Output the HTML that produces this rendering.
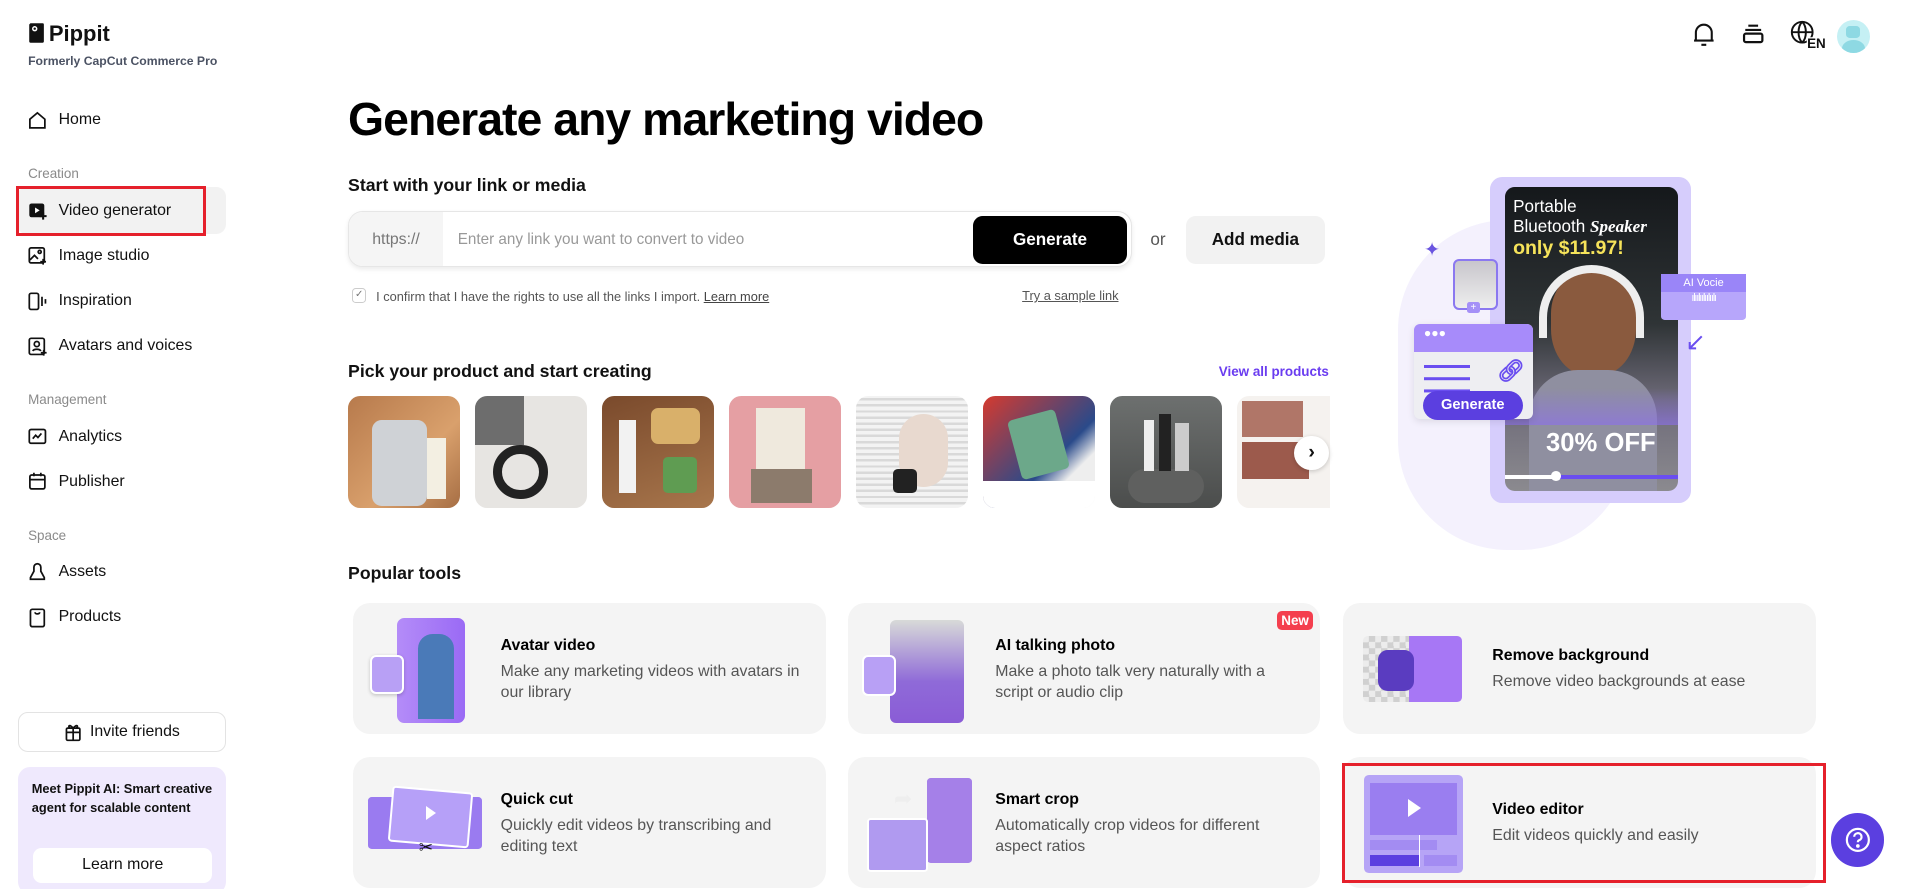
<!DOCTYPE html>
<html><head><meta charset="utf-8">
<style>
*{box-sizing:border-box;margin:0;padding:0}
html,body{width:1905px;height:889px;overflow:hidden;background:#fff}
#root{zoom:1.2212;width:1560px;height:728px;position:relative;font-family:"Liberation Sans",Arial,sans-serif;color:#111}
.a{position:absolute}
.nav{position:absolute;left:22px;font-size:13px;color:#111;display:flex;align-items:center;gap:9px}
.nav svg{width:17px;height:17px}
.lab{position:absolute;left:23px;font-size:11px;color:#8a8a8a}
.thumb{position:absolute;top:324px;width:92px;height:92px;border-radius:10px;overflow:hidden}
.card{position:absolute;width:387px;height:107px;background:#f4f4f4;border-radius:14px}
.card .t{position:absolute;left:121px;font-size:13px;font-weight:bold;color:#000}
.card .d{position:absolute;left:121px;font-size:13px;color:#555;line-height:17px;width:245px}
</style></head><body><div id="root">

<svg class="a" style="left:23px;top:18px" width="14" height="18" viewBox="0 0 14 18"><path d="M2 1h10a1 1 0 0 1 1 1v14a1 1 0 0 1-1 1H2a1 1 0 0 1-1-1V2z" fill="#111"/><circle cx="5.5" cy="5.5" r="2.2" fill="#fff"/><circle cx="5.5" cy="5.5" r="1" fill="#111"/></svg>
<div class="a" style="left:40px;top:17px;font-size:18px;font-weight:bold">Pippit</div>
<div class="a" style="left:23px;top:44px;font-size:10px;font-weight:bold;color:#4b5263">Formerly CapCut Commerce Pro</div>

<div class="nav" style="top:90px"><svg viewBox="0 0 18 18" fill="none" stroke="#111" stroke-width="1.5"><path d="M2.5 8 9 2.5 15.5 8v7.5h-13z"/></svg>Home</div>
<div class="lab" style="top:136px">Creation</div>
<div class="a" style="left:14px;top:153px;width:171px;height:39px;background:#f2f2f2;border-radius:8px"></div>
<div class="a" style="left:13px;top:152px;width:156px;height:41px;border:3px solid #e5202b"></div>
<div class="nav" style="top:164px"><svg viewBox="0 0 18 18"><rect x="2" y="3" width="13" height="12" rx="2" fill="#111"/><path d="M7 6.5v5l4-2.5z" fill="#fff"/><path d="M14 11v6M11 14h6" stroke="#111" stroke-width="1.8"/></svg>Video generator</div>
<div class="nav" style="top:201px"><svg viewBox="0 0 18 18" fill="none" stroke="#111" stroke-width="1.5"><rect x="2" y="2.5" width="13" height="13" rx="1.5"/><circle cx="11" cy="6" r="1.3"/><path d="M2.5 13l4-4 3 3"/><path d="M14 12v5M11.5 14.5h5"/></svg>Image studio</div>
<div class="nav" style="top:238px"><svg viewBox="0 0 18 18" fill="none" stroke="#111" stroke-width="1.5"><rect x="2" y="2" width="8" height="14" rx="1.5"/><path d="M13 5v8M16 7v4"/></svg>Inspiration</div>
<div class="nav" style="top:275px"><svg viewBox="0 0 18 18" fill="none" stroke="#111" stroke-width="1.5"><rect x="2" y="2" width="13" height="14" rx="1.5"/><circle cx="8.5" cy="7" r="2.2"/><path d="M5 13c1-2 6-2 7 0"/><path d="M14.5 12v5M12 14.5h5"/></svg>Avatars and voices</div>
<div class="lab" style="top:321px">Management</div>
<div class="nav" style="top:349px"><svg viewBox="0 0 18 18" fill="none" stroke="#111" stroke-width="1.5"><rect x="2" y="3" width="14" height="12" rx="1.5"/><path d="M5 11l2.5-3 2 2 3-3.5"/></svg>Analytics</div>
<div class="nav" style="top:386px"><svg viewBox="0 0 18 18" fill="none" stroke="#111" stroke-width="1.5"><rect x="2.5" y="3.5" width="13" height="12" rx="1.5"/><path d="M2.5 7.5h13M6 1.5v3M12 1.5v3"/></svg>Publisher</div>
<div class="lab" style="top:432px">Space</div>
<div class="nav" style="top:460px"><svg viewBox="0 0 18 18" fill="none" stroke="#111" stroke-width="1.5"><path d="M6 4.5a3 3 0 0 1 6 0V8l3 5.5v1.5H3v-1.5L6 8z"/></svg>Assets</div>
<div class="nav" style="top:497px"><svg viewBox="0 0 18 18" fill="none" stroke="#111" stroke-width="1.5"><rect x="3" y="2" width="12" height="15" rx="1.5"/><path d="M7 4.5c0 2 4 2 4 0"/></svg>Products</div>

<div class="a" style="left:15px;top:583px;width:170px;height:33px;border:1px solid #e3e3e3;border-radius:8px;font-size:13px;display:flex;align-items:center;justify-content:center;gap:6px"><svg width="15" height="16" viewBox="0 0 15 16" fill="none" stroke="#111" stroke-width="1.4"><rect x="2" y="5" width="11" height="10" rx="1"/><path d="M2 8.5h11M7.5 5v10M5 5c-2-1-1-4 2.5 0M10 5c2-1 1-4-2.5 0"/></svg>Invite friends</div>
<div class="a" style="left:15px;top:628px;width:170px;height:104px;background:#efe9fd;border-radius:10px"></div>
<div class="a" style="left:26px;top:639px;width:150px;font-size:10.5px;font-weight:bold;line-height:15px;color:#111">Meet Pippit AI: Smart creative agent for scalable content</div>
<div class="a" style="left:27px;top:694px;width:147px;height:29px;background:#fff;border-radius:7px;font-size:13px;display:flex;align-items:center;justify-content:center">Learn more</div>

<svg class="a" style="left:1385px;top:17px" width="21" height="22" viewBox="0 0 21 22" fill="none" stroke="#111" stroke-width="1.7"><path d="M4 16V9.5a6.5 6.5 0 0 1 13 0V16zM2.5 16h16M8.5 19.5h4"/></svg>
<svg class="a" style="left:1426px;top:18px" width="20" height="20" viewBox="0 0 20 20" fill="none" stroke="#111" stroke-width="1.8"><path d="M6 3h8M3.5 6.5h13"/><rect x="2.5" y="9.5" width="15" height="7" rx="1.5"/></svg>
<svg class="a" style="left:1466px;top:16px" width="30" height="24" viewBox="0 0 30 24" fill="none" stroke="#111" stroke-width="1.6"><circle cx="10" cy="10" r="8.5"/><path d="M1.5 10h17M10 1.5c-4 4-4 13 0 17M10 1.5c4 4 4 13 0 17"/><text x="14" y="23" font-family="Liberation Sans" font-weight="bold" font-size="11" fill="#111" stroke="#fff" stroke-width="2" paint-order="stroke">EN</text></svg>
<div class="a" style="left:1504px;top:16px;width:27px;height:27px;border-radius:50%;background:#c5f0f4;overflow:hidden"><div class="a" style="left:8px;top:5px;width:11px;height:10px;background:#8ed9e3;border-radius:3px"></div><div class="a" style="left:4px;top:17px;width:19px;height:14px;background:#8ed9e3;border-radius:50%"></div></div>

<div class="a" style="left:285px;top:75px;font-size:38px;font-weight:bold;letter-spacing:-0.8px;color:#000">Generate any marketing video</div>
<div class="a" style="left:285px;top:143px;font-size:14.5px;font-weight:bold">Start with your link or media</div>
<div class="a" style="left:285px;top:173px;width:642px;height:46px;border:1px solid #e6e6e6;border-radius:12px;box-shadow:0 2px 4px rgba(0,0,0,.08);overflow:hidden;background:#fff">
 <div class="a" style="left:0;top:0;width:77px;height:46px;background:#f5f5f5;font-size:13px;color:#777;display:flex;align-items:center;justify-content:center">https://</div>
 <div class="a" style="left:89px;top:15px;font-size:12.5px;color:#999">Enter any link you want to convert to video</div>
 <div class="a" style="left:511px;top:3px;width:126px;height:39px;background:#000;border-radius:8px;color:#fff;font-size:14px;font-weight:bold;display:flex;align-items:center;justify-content:center">Generate</div>
</div>
<div class="a" style="left:942px;top:188px;font-size:14px;color:#555">or</div>
<div class="a" style="left:971px;top:177px;width:114px;height:39px;background:#f2f2f2;border-radius:8px;font-size:14px;font-weight:bold;display:flex;align-items:center;justify-content:center">Add media</div>
<div class="a" style="left:288px;top:236px;width:12px;height:12px;border:1px solid #ccc;border-radius:3px;font-size:8px;color:#777;text-align:center;line-height:10px">✓</div>
<div class="a" style="left:308px;top:237px;font-size:10.5px;color:#555">I confirm that I have the rights to use all the links I import. <u style="color:#444">Learn more</u></div>
<div class="a" style="left:837px;top:236px;font-size:10.5px;color:#555;text-decoration:underline">Try a sample link</div>

<div class="a" style="left:285px;top:296px;font-size:14.5px;font-weight:bold">Pick your product and start creating</div>
<div class="a" style="left:998px;top:298px;font-size:11px;font-weight:bold;color:#6a3cf0">View all products</div>
<div class="thumb" style="left:285px;background:linear-gradient(135deg,#b77a4c,#d9a06c 60%,#a66e44)"><div class="a" style="left:20px;top:20px;width:45px;height:70px;background:#cfd2d6;border-radius:8px"></div><div class="a" style="left:65px;top:35px;width:15px;height:50px;background:#f3efe2"></div></div>
<div class="thumb" style="left:389px;background:#e7e5e2"><div class="a" style="left:0;top:0;width:40px;height:40px;background:#6d6d6d"></div><div class="a" style="left:15px;top:40px;width:45px;height:45px;border:8px solid #222;border-radius:50%"></div></div>
<div class="thumb" style="left:493px;background:linear-gradient(160deg,#7a4a2c,#a8764c)"><div class="a" style="left:14px;top:20px;width:14px;height:60px;background:#f2f2f2"></div><div class="a" style="left:50px;top:50px;width:28px;height:30px;background:#5f9c52;border-radius:4px"></div><div class="a" style="left:40px;top:10px;width:40px;height:30px;background:#d9b06a;border-radius:6px"></div></div>
<div class="thumb" style="left:597px;background:#e59fa3"><div class="a" style="left:22px;top:10px;width:40px;height:50px;background:#efe9dd"></div><div class="a" style="left:18px;top:60px;width:50px;height:28px;background:#8c7b6c"></div></div>
<div class="thumb" style="left:701px;background:repeating-linear-gradient(0deg,#f3f3f3 0 3px,#d9d9d9 3px 5px)"><div class="a" style="left:35px;top:15px;width:40px;height:60px;background:#e8d9cf;border-radius:20px"></div><div class="a" style="left:30px;top:60px;width:20px;height:20px;background:#222;border-radius:4px"></div></div>
<div class="thumb" style="left:805px;background:linear-gradient(135deg,#d63a2e,#2a4a8a 60%,#eee 75%)"><div class="a" style="left:25px;top:15px;width:40px;height:50px;background:#6ca88a;border-radius:4px;transform:rotate(-15deg)"></div><div class="a" style="left:0;top:70px;width:92px;height:22px;background:#fff"></div></div>
<div class="thumb" style="left:909px;background:linear-gradient(#6d706f,#4b4d4c)"><div class="a" style="left:15px;top:60px;width:62px;height:28px;background:#5f605f;border-radius:30px"></div><div class="a" style="left:28px;top:20px;width:8px;height:42px;background:#eee"></div><div class="a" style="left:40px;top:15px;width:10px;height:47px;background:#222"></div><div class="a" style="left:53px;top:22px;width:12px;height:40px;background:#ccc"></div></div>
<div class="thumb" style="left:1013px;width:76px;background:#f5f2ef;border-radius:10px 0 0 10px"><div class="a" style="left:4px;top:4px;width:50px;height:30px;background:#b07668"></div><div class="a" style="left:4px;top:38px;width:55px;height:30px;background:#9c5a4c"></div></div>
<div class="a" style="left:1060px;top:357px;width:28px;height:28px;border-radius:50%;background:#fff;box-shadow:0 1px 4px rgba(0,0,0,.2);font-size:16px;font-weight:bold;text-align:center;line-height:27px">›</div>

<div class="a" style="left:1145px;top:180px;width:190px;height:270px;border-radius:90px;background:#f4f1fd"></div>
<div class="a" style="left:1220px;top:145px;width:165px;height:267px;background:#d6cdfc;border-radius:10px"></div>
<div class="a" style="left:1232px;top:153px;width:142px;height:249px;border-radius:8px;background:linear-gradient(#15181b,#2f3436 45%,#6d6a78 70%,#8b8a8f);overflow:hidden">
 <div class="a" style="left:7px;top:8px;color:#fff;font-size:14px;line-height:17px">Portable<br>Bluetooth <i style="font-family:'Liberation Serif';font-weight:bold">Speaker</i></div>
 <div class="a" style="left:7px;top:41px;color:#f6e35a;font-size:16px;font-weight:bold">only $11.97!</div>
 <div class="a" style="left:38px;top:70px;width:70px;height:85px;background:#8a5a3e;border-radius:40% 40% 45% 45%"></div>
 <div class="a" style="left:28px;top:64px;width:86px;height:60px;border:7px solid #eee;border-bottom:none;border-radius:45px 45px 0 0"></div>
 <div class="a" style="left:20px;top:150px;width:105px;height:100px;background:#8f8fa0;border-radius:40px 40px 0 0"></div>
 <div class="a" style="left:0;top:165px;width:142px;height:30px;background:linear-gradient(transparent,rgba(140,110,240,.6))"></div>
 <div class="a" style="left:34px;top:198px;color:#fff;font-size:21px;font-weight:bold">30% OFF</div>
 <div class="a" style="left:0;top:236px;width:142px;height:3px;background:#6a4ef0"></div>
 <div class="a" style="left:0;top:236px;width:42px;height:3px;background:#fff"></div>
 <div class="a" style="left:38px;top:233px;width:8px;height:8px;border-radius:50%;background:#fff"></div>
</div>
<div class="a" style="left:1190px;top:212px;width:37px;height:42px;border:2px solid #8b78f0;border-radius:5px;background:linear-gradient(#c8c6cc,#eee)"></div>
<div class="a" style="left:1201px;top:247px;width:11px;height:9px;background:#a590f7;border-radius:2px;color:#fff;font-size:8px;text-align:center;line-height:9px">+</div>
<div class="a" style="left:1166px;top:195px;color:#6a55e0;font-size:16px">✦</div>
<div class="a" style="left:1158px;top:265px;width:97px;height:78px;background:#eeeef2;border-radius:5px;overflow:hidden;box-shadow:0 2px 6px rgba(0,0,0,.1)"><div style="height:23px;background:#a78bfa;color:#fff;font-size:10px;padding-left:8px;line-height:16px">●●●</div>
<div class="a" style="left:8px;top:34px;width:38px;height:2px;background:#6a4ef0;box-shadow:0 10px 0 #6a4ef0,0 20px 0 #6a4ef0"></div><div class="a" style="left:68px;top:28px;color:#6a4ef0;font-size:18px;font-weight:bold">🔗︎</div></div>
<div class="a" style="left:1165px;top:320px;width:82px;height:24px;background:#5b3fe0;border-radius:12px;color:#fff;font-size:12px;font-weight:bold;text-align:center;line-height:24px">Generate</div>
<div class="a" style="left:1360px;top:224px;width:70px;height:38px;background:#b7a6fb;border-radius:3px"><div style="height:15px;background:#9a85f8;color:#fff;font-size:9px;text-align:center;line-height:15px">AI Vocie</div><div style="color:#fff;font-size:9px;text-align:center;letter-spacing:-1px">ılıılıılıılıılı</div></div>
<div class="a" style="left:1380px;top:268px;color:#6a4ef0;font-size:20px">↙</div>

<div class="a" style="left:285px;top:461px;font-size:14.5px;font-weight:bold">Popular tools</div>

<div class="card" style="left:289px;top:494px">
 <div class="a" style="left:36px;top:12px;width:56px;height:86px;background:linear-gradient(90deg,#b48cf8,#9a6af5);border-radius:6px"></div>
 <div class="a" style="left:53px;top:25px;width:30px;height:70px;background:#4a7ab8;border-radius:12px 12px 0 0"></div>
 <div class="a" style="left:14px;top:42px;width:28px;height:32px;background:#b8a0f5;border:2px solid #fff;border-radius:5px;box-shadow:0 1px 3px rgba(0,0,0,.2)"></div>
 <div class="t" style="top:28px">Avatar video</div>
 <div class="d" style="top:48px">Make any marketing videos with avatars in our library</div>
</div>
<div class="card" style="left:694px;top:494px">
 <div class="a" style="left:35px;top:14px;width:60px;height:84px;background:linear-gradient(#d8dad8,#8f6ad8 60%,#8a5cd6);border-radius:5px"></div>
 <div class="a" style="left:12px;top:42px;width:28px;height:34px;background:#b8a0f5;border:2px solid #fff;border-radius:5px"></div>
 <div class="a" style="left:352px;top:6px;width:29px;height:16px;background:#f43f4e;border-radius:4px;color:#fff;font-size:11px;font-weight:bold;text-align:center;line-height:16px">New</div>
 <div class="t" style="top:28px">AI talking photo</div>
 <div class="d" style="top:48px">Make a photo talk very naturally with a script or audio clip</div>
</div>
<div class="card" style="left:1100px;top:494px">
 <div class="a" style="left:16px;top:27px;width:38px;height:54px;background:repeating-conic-gradient(#d0d0d0 0 25%,#ececec 0 50%) 0 0/10px 10px;border-radius:4px 0 0 4px"></div>
 <div class="a" style="left:54px;top:27px;width:43px;height:54px;background:#a777f5;border-radius:0 4px 4px 0"></div>
 <div class="a" style="left:28px;top:38px;width:30px;height:34px;background:#5a3cc0;border-radius:8px"></div>
 <div class="t" style="left:122px;top:36px">Remove background</div>
 <div class="d" style="left:122px;top:56px">Remove video backgrounds at ease</div>
</div>
<div class="card" style="left:289px;top:620px">
 <div class="a" style="left:12px;top:33px;width:94px;height:42px;background:#9a7bf0;border-radius:3px"></div>
 <div class="a" style="left:30px;top:26px;width:66px;height:46px;background:#b6a0f8;border:2px solid #fff;border-radius:3px;transform:rotate(5deg)"></div>
 <div class="a" style="left:60px;top:40px;width:0;height:0;border-left:9px solid #fff;border-top:6px solid transparent;border-bottom:6px solid transparent"></div>
 <div class="a" style="left:54px;top:66px;font-size:14px">✂</div>
 <div class="t" style="top:28px">Quick cut</div>
 <div class="d" style="top:48px">Quickly edit videos by transcribing and editing text</div>
</div>
<div class="card" style="left:694px;top:620px">
 <div class="a" style="left:65px;top:17px;width:37px;height:70px;background:#a580e8;border-radius:3px"></div>
 <div class="a" style="left:16px;top:50px;width:50px;height:44px;background:#b09af0;border:2px solid #fff;border-radius:3px"></div>
 <div class="a" style="left:38px;top:24px;color:#eee;font-size:18px">➦</div>
 <div class="t" style="top:28px">Smart crop</div>
 <div class="d" style="top:48px">Automatically crop videos for different aspect ratios</div>
</div>
<div class="card" style="left:1100px;top:620px">
 <div class="a" style="left:17px;top:15px;width:81px;height:80px;background:#b6a4f6;border-radius:4px"></div>
 <div class="a" style="left:22px;top:21px;width:71px;height:43px;background:#9a7ef0"></div>
 <div class="a" style="left:53px;top:34px;width:0;height:0;border-left:11px solid #fff;border-top:8px solid transparent;border-bottom:8px solid transparent"></div>
 <div class="a" style="left:22px;top:68px;width:55px;height:8px;background:#a38cf2"></div>
 <div class="a" style="left:22px;top:80px;width:41px;height:9px;background:#5b3fe0"></div>
 <div class="a" style="left:66px;top:80px;width:27px;height:9px;background:#a38cf2"></div>
 <div class="a" style="left:62px;top:64px;width:1px;height:26px;background:#fff"></div>
 <div class="t" style="left:122px;top:36px">Video editor</div>
 <div class="d" style="left:122px;top:56px">Edit videos quickly and easily</div>
</div>
<div class="a" style="left:1099px;top:625px;width:396px;height:98px;border:3px solid #e5202b"></div>

<div class="a" style="left:1499px;top:666px;width:44px;height:44px;border-radius:50%;background:#5b3fe0"><svg width="44" height="44" viewBox="0 0 44 44" fill="none" stroke="#fff" stroke-width="1.8"><circle cx="22" cy="22" r="9"/><path d="M19 19.5a3 3 0 1 1 3.8 2.9c-.6.3-.8.8-.8 1.6"/><circle cx="22" cy="27" r=".6" fill="#fff"/></svg></div>

</div></body></html>
